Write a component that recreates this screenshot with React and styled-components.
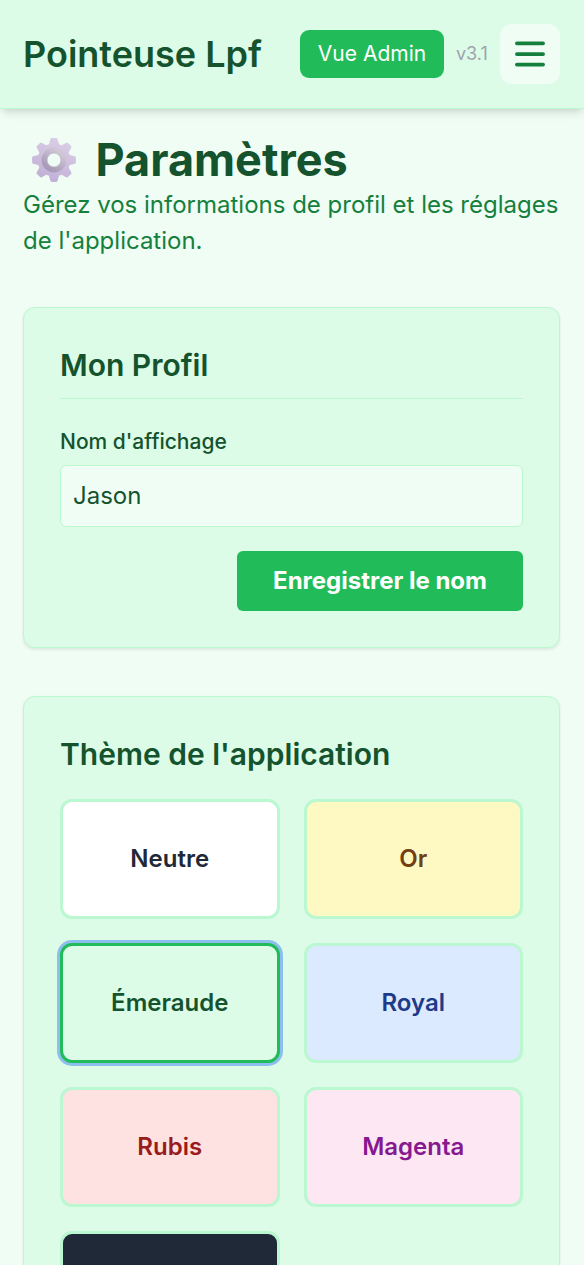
import React from "react";
import styled, { createGlobalStyle } from "styled-components";

const GlobalStyle = createGlobalStyle`
  *, *::before, *::after { box-sizing: border-box; }
  html { height: 100%; overflow: hidden; }
  body {
    margin: 0;
    height: 100%;
    overflow: hidden;
    background: #f0fdf4;
    color: #14532d;
    font: 400 24px/36px Inter, "Liberation Sans", sans-serif;
  }
  h1, h2, p { margin: 0; }
  button, input { font: inherit; margin: 0; }
`;

const Header = styled.header`
  position: relative;
  display: flex;
  align-items: center;
  justify-content: space-between;
  height: 109px;
  padding: 0 24px 0 23px;
  background: #dcfce7;
  border-bottom: 1px solid #bbf7d0;
  box-shadow: 0 6px 9px -1.5px rgba(0, 0, 0, 0.1), 0 3px 6px -3px rgba(0, 0, 0, 0.1);
`;

const Brand = styled.div`
  font-size: 36px;
  line-height: 48px;
  font-weight: 600;
  white-space: nowrap;
`;

const HeaderActions = styled.div`
  display: flex;
  align-items: center;
  gap: 12px;
`;

const AdminButton = styled.button`
  width: 144px;
  padding: 9px 0;
  border: 0;
  border-radius: 9px;
  background: #21bc59;
  color: #fff;
  font-size: 21px;
  line-height: 30px;
  white-space: nowrap;
`;

const Version = styled.span`
  width: 32px;
  font-size: 18px;
  line-height: 24px;
  color: #9ca3af;
`;

const MenuButton = styled.button`
  display: flex;
  align-items: center;
  justify-content: center;
  width: 60px;
  height: 60px;
  padding: 0;
  border: 0;
  border-radius: 12px;
  background: #f0fdf4;
  color: #15803d;
`;

const Main = styled.main`
  padding: 24px 24px 0 23px;
`;

const PageTitle = styled.h1`
  display: flex;
  align-items: center;
  gap: 18.5px;
  padding-left: 8px;
  font-size: 45px;
  line-height: 54px;
  font-weight: 700;
`;

const Subtitle = styled.p`
  color: #15803d;
`;

const Card = styled.section`
  margin-top: 48px;
  padding: 36px;
  background: #dcfce7;
  border: 1px solid #bbf7d0;
  border-radius: 12px;
  box-shadow: 0 1.5px 3px rgba(0, 0, 0, 0.08);
`;

const CardTitle = styled.h2`
  margin-bottom: 24px;
  padding-bottom: ${(p) => (p.$ruled ? "12px" : 0)};
  border-bottom: ${(p) => (p.$ruled ? "1px solid #bbf7d0" : 0)};
  font-size: 30px;
  line-height: 42px;
  font-weight: 600;
`;

const Field = styled.div`
  display: flow-root;
`;

const Label = styled.label`
  font-size: 21px;
  line-height: 30px;
  font-weight: 500;
`;

const TextInput = styled.input`
  display: block;
  width: 100%;
  height: 62px;
  margin-top: 6px;
  padding: 11px 12px 13px;
  border: 1px solid #bbf7d0;
  border-radius: 6px;
  outline: 0;
  background: #f0fdf4;
  color: #14532d;
`;

const FormActions = styled.div`
  display: flex;
  justify-content: flex-end;
  margin-top: 24px;
`;

const SaveButton = styled.button`
  width: 286px;
  padding: 12px 0;
  border: 0;
  border-radius: 6px;
  background: #21bc59;
  color: #fff;
  font-weight: 700;
  white-space: nowrap;
`;

const ThemeGrid = styled.div`
  display: grid;
  grid-template-columns: 1fr 1fr;
  gap: 24px;
`;

const ThemeTile = styled.button`
  height: 120px;
  padding: 0;
  border: 3px solid ${(p) => (p.$active ? "#21bc59" : "#bbf7d0")};
  border-radius: 12px;
  background: ${(p) => p.$bg};
  color: ${(p) => p.$fg};
  font-weight: 600;
  box-shadow: ${(p) => (p.$active ? "0 0 0 3px rgba(59, 130, 246, 0.5)" : "none")};
`;

const THEMES = [
  { name: "Neutre", bg: "#ffffff", fg: "#1f2937" },
  { name: "Or", bg: "#fef9c3", fg: "#713f12" },
  { name: "Émeraude", bg: "#dcfce7", fg: "#14532d", active: true },
  { name: "Royal", bg: "#dbeafe", fg: "#1e3a8a" },
  { name: "Rubis", bg: "#fee2e2", fg: "#991b1b" },
  { name: "Magenta", bg: "#fce7f3", fg: "#86198f" },
  { name: "", bg: "#1f2937", fg: "#f9fafb" },
];

const GearIcon = () => (
  <svg width="46" height="46" viewBox="-23 -23 46 46" aria-hidden="true">
    <defs>
      <linearGradient id="teeth" gradientUnits="userSpaceOnUse" x1="10" y1="-22" x2="-8" y2="22">
        <stop offset="0" stopColor="#dbd0e6" />
        <stop offset="1" stopColor="#c0aed6" />
      </linearGradient>
      <linearGradient id="hub" x1="0.8" y1="0.1" x2="0.25" y2="0.9">
        <stop offset="0" stopColor="#cfc7d6" />
        <stop offset="1" stopColor="#a99cb8" />
      </linearGradient>
    </defs>
    <path
      fill="url(#teeth)"
      stroke="url(#teeth)"
      strokeWidth="3"
      strokeLinejoin="round"
      d="M-2.2 -20.4H2.2L3.8 -14.6L7.7 -13L12.9 -16L16 -12.9L13 -7.7L14.6 -3.8L20.4 -2.2V2.2L14.6 3.8L13 7.7L16 12.9L12.9 16L7.7 13L3.8 14.6L2.2 20.4H-2.2L-3.8 14.6L-7.7 13L-12.9 16L-16 12.9L-13 7.7L-14.6 3.8L-20.4 2.2V-2.2L-14.6 -3.8L-13 -7.7L-16 -12.9L-12.9 -16L-7.7 -13L-3.8 -14.6Z"
    />
    <circle r="9.6" fill="none" stroke="url(#hub)" strokeWidth="5.8" />
    <circle r="6.9" fill="#f0fdf4" stroke="#b9adc5" strokeWidth="0.6" />
  </svg>
);

const MenuIcon = () => (
  <svg width="36" height="36" viewBox="0 0 36 36" fill="none" stroke="currentColor" strokeWidth="3.75" strokeLinecap="round" aria-hidden="true">
    <path d="M4.9 7.3h26.2M4.9 18h26.2M4.9 28.6h26.2" />
  </svg>
);

export default function App() {
  return (
    <>
      <GlobalStyle />
      <Header>
        <Brand>Pointeuse Lpf</Brand>
        <HeaderActions>
          <AdminButton>Vue Admin</AdminButton>
          <Version>v3.1</Version>
          <MenuButton aria-label="Menu">
            <MenuIcon />
          </MenuButton>
        </HeaderActions>
      </Header>
      <Main>
        <PageTitle>
          <GearIcon />
          Paramètres
        </PageTitle>
        <Subtitle>Gérez vos informations de profil et les réglages de l'application.</Subtitle>
        <Card>
          <CardTitle $ruled>Mon Profil</CardTitle>
          <Field>
            <Label htmlFor="name">Nom d'affichage</Label>
            <TextInput id="name" defaultValue="Jason" />
          </Field>
          <FormActions>
            <SaveButton>Enregistrer le nom</SaveButton>
          </FormActions>
        </Card>
        <Card>
          <CardTitle>Thème de l'application</CardTitle>
          <ThemeGrid>
            {THEMES.map((t) => (
              <ThemeTile key={t.bg} $bg={t.bg} $fg={t.fg} $active={t.active}>
                {t.name}
              </ThemeTile>
            ))}
          </ThemeGrid>
        </Card>
      </Main>
    </>
  );
}
